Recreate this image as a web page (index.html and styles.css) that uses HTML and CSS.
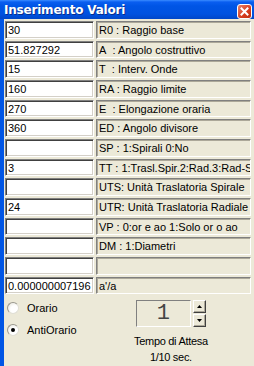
FILE: index.html
```html
<!DOCTYPE html>
<html lang="it">
<head>
  <meta charset="UTF-8">
  <title>Inserimento Valori</title>
  <link rel="stylesheet" href="styles.css">
</head>
<body>
  <div class="window">
    <div class="titlebar">
      <span class="title">Inserimento Valori</span>
      <span class="close">
        <svg width="13" height="13" viewBox="0 0 13 13">
          <path d="M3.5 3.5 L9.5 9.5 M9.5 3.5 L3.5 9.5" stroke="#fff" stroke-width="2" stroke-linecap="square"/>
        </svg>
      </span>
    </div>

    <div class="frame">
      <div class="rows">
        <div class="field">30</div><div class="label">R0 : Raggio base</div>
        <div class="field">51.827292</div><div class="label">A&nbsp; : Angolo costruttivo</div>
        <div class="field">15</div><div class="label">T&nbsp; : Interv. Onde</div>
        <div class="field">160</div><div class="label">RA : Raggio limite</div>
        <div class="field">270</div><div class="label">E&nbsp; : Elongazione oraria</div>
        <div class="field">360</div><div class="label">ED : Angolo divisore</div>
        <div class="field"></div><div class="label">SP : 1:Spirali 0:No</div>
        <div class="field">3</div><div class="label">TT : 1:Trasl.Spir.2:Rad.3:Rad-S</div>
        <div class="field"></div><div class="label">UTS: Unità Traslatoria Spirale</div>
        <div class="field">24</div><div class="label">UTR: Unità Traslatoria Radiale</div>
        <div class="field"></div><div class="label">VP : 0:or e ao 1:Solo or o ao</div>
        <div class="field"></div><div class="label">DM : 1:Diametri</div>
        <div class="field"></div><div class="label"></div>
        <div class="field">0.000000007196</div><div class="label">a'/a</div>
      </div>

      <div class="bottom">
        <div class="radios">
          <label class="radio"><span class="dot"></span>Orario</label>
          <label class="radio"><span class="dot checked"></span>AntiOrario</label>
        </div>
        <div class="timer">
          <div class="spin">
            <div class="spin-value">1</div>
            <div class="spin-buttons">
              <span class="spin-btn">
                <svg width="5" height="3" viewBox="0 0 5 3"><path d="M0 3 L2.5 0 L5 3 Z" fill="#000"/></svg>
              </span>
              <span class="spin-btn">
                <svg width="5" height="3" viewBox="0 0 5 3"><path d="M0 0 L2.5 3 L5 0 Z" fill="#000"/></svg>
              </span>
            </div>
          </div>
          <div class="caption">Tempo di Attesa<br>1/10 sec.</div>
        </div>
      </div>
    </div>
  </div>
</body>
</html>
```

FILE: styles.css
```css
body {
  margin: 0;
  font-family: "Liberation Sans", Arial, sans-serif;
  font-size: 11px;
  color: #000;
  background-color: #ece9d8;
}

.window {
  width: 254px;
  height: 366px;
  display: flex;
  flex-direction: column;
  overflow: hidden;
}

.titlebar {
  height: 19px;
  flex: none;
  display: flex;
  align-items: center;
  justify-content: space-between;
  padding: 0 2px 0 4px;
  background: linear-gradient(#3a8cff 0, #0a5ef0 2px, #0055e5 6px, #0052e0 14px, #0046c8 19px);
}

.title {
  color: #fff;
  font-family: "DejaVu Sans", sans-serif;
  font-weight: bold;
  font-size: 12px;
  letter-spacing: -0.2px;
  text-shadow: 1px 1px #0a2e8c;
}

.close {
  width: 13px;
  height: 13px;
  margin-top: 3px;
  border: 1px solid #fff;
  border-radius: 3px;
  background: linear-gradient(135deg, #e8826a, #d63c1e 60%, #c0300f);
  display: flex;
}

.frame {
  flex: 1;
  border-left: 4px solid #0055e5;
  padding: 2px 3px 0 1px;
}

.rows {
  display: grid;
  grid-template-columns: 89px 155px;
  grid-auto-rows: 17.66px;
  column-gap: 2px;
  row-gap: 2px;
}

.field {
  background: #fff;
  border-top: 1px solid #808080;
  border-left: 1px solid #808080;
  border-bottom: 1px solid #fff;
  border-right: 1px solid #fff;
  box-shadow: inset 1px 1px #404040, inset -1px -1px #d4d0c8;
  padding: 0 2px;
  line-height: 16px;
  white-space: nowrap;
  overflow: hidden;
}

.label {
  border-top: 1px solid #808080;
  border-left: 1px solid #808080;
  border-bottom: 1px solid #fff;
  border-right: 1px solid #fff;
  box-shadow: inset 1px 1px #aca899;
  padding: 0 2px;
  line-height: 16px;
  white-space: nowrap;
  overflow: hidden;
}

.bottom {
  display: flex;
  margin-top: 6px;
}

.radios {
  width: 127px;
  flex: none;
  display: flex;
  flex-direction: column;
  gap: 9px;
  padding: 1px 0 0 2px;
}

.radio {
  display: flex;
  align-items: center;
  gap: 8px;
  height: 13px;
}

.dot {
  width: 10px;
  height: 10px;
  border-radius: 50%;
  background: radial-gradient(circle at 65% 65%, #fff 40%, #e2e1d8);
  border: 1px solid #e0dfd6;
  border-top-color: #9a988e;
  border-left-color: #9a988e;
  position: relative;
}

.dot.checked::after {
  content: "";
  position: absolute;
  left: 3px;
  top: 3px;
  width: 4px;
  height: 4px;
  border-radius: 50%;
  background: #000;
}

.timer {
  display: flex;
  flex-direction: column;
  align-items: center;
}

.spin {
  display: flex;
  gap: 2px;
}

.spin-value {
  width: 53px;
  height: 25px;
  border-top: 1px solid #808080;
  border-left: 1px solid #808080;
  border-bottom: 1px solid #fff;
  border-right: 1px solid #fff;
  font-family: "Liberation Mono", monospace;
  font-size: 22px;
  line-height: 25px;
  text-align: center;
  color: #444;
}

.spin-buttons {
  display: flex;
  flex-direction: column;
  gap: 1px;
}

.spin-btn {
  width: 11px;
  height: 11px;
  background: #ece9d8;
  border: 1px solid #fff;
  border-right-color: #404040;
  border-bottom-color: #404040;
  box-shadow: inset -1px -1px #aca899;
  display: flex;
  align-items: center;
  justify-content: center;
}

.caption {
  margin-top: 6px;
  text-align: center;
  line-height: 16px;
  letter-spacing: -0.3px;
}
```
